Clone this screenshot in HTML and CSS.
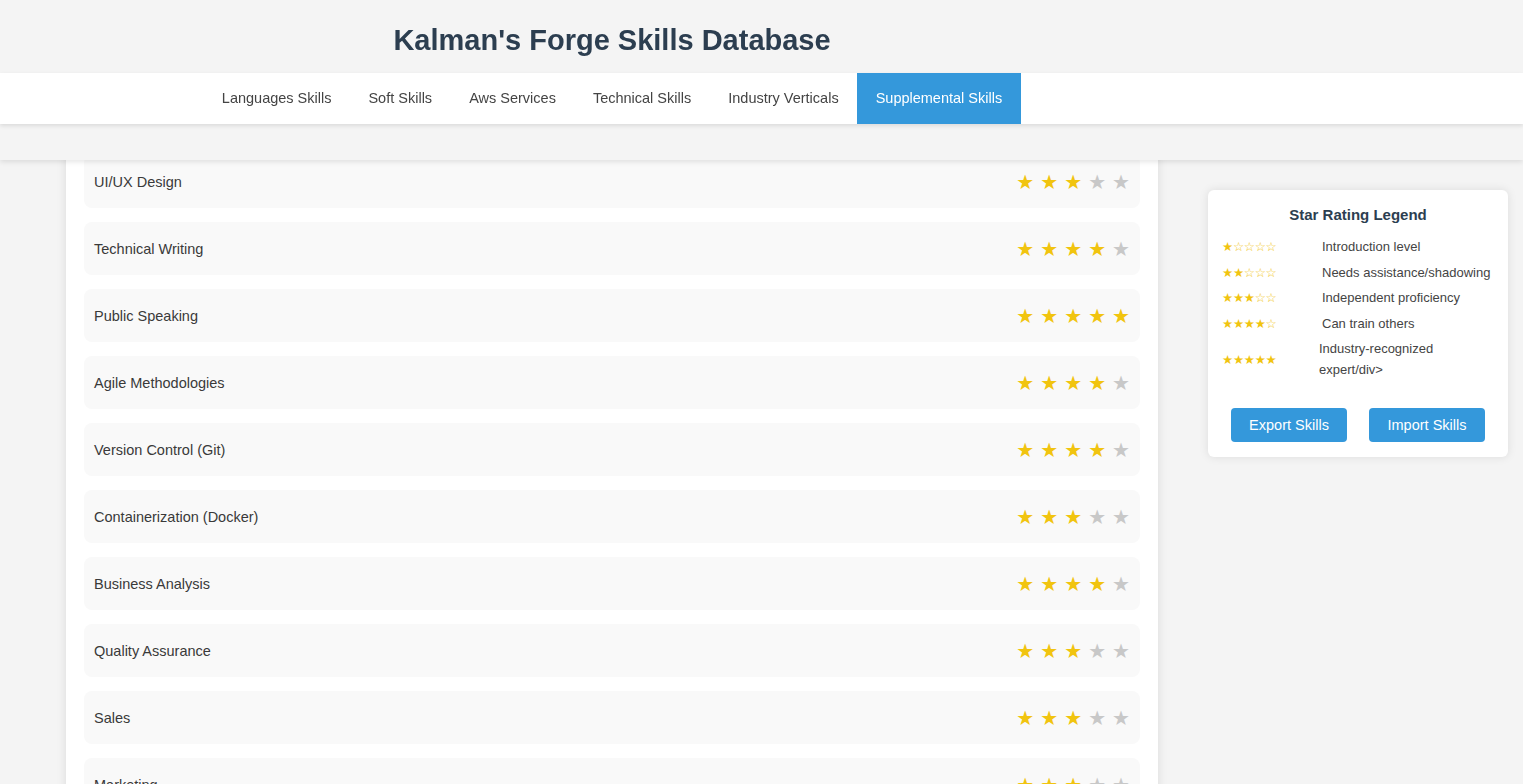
FILE: index.html
```html
<!DOCTYPE html>
<html lang="en">
<head>
<meta charset="utf-8">
<title>Kalman's Forge Skills Database</title>
<link rel="stylesheet" href="styles.css">
</head>
<body>
<header class="site-header">
  <div class="title-wrap"><h1 class="title">Kalman's Forge Skills Database</h1></div>
  <nav class="tabs">
    <div class="tabs-inner">
      <a class="tab">Languages Skills</a>
      <a class="tab">Soft Skills</a>
      <a class="tab">Aws Services</a>
      <a class="tab">Technical Skills</a>
      <a class="tab">Industry Verticals</a>
      <a class="tab active">Supplemental Skills</a>
    </div>
  </nav>
</header>

<div class="layout">
  <main class="card skills">
    <div class="skill"><span class="name">UI/UX Design</span><span class="stars"><i class="on">★</i><i class="on">★</i><i class="on">★</i><i>★</i><i>★</i></span></div>
    <div class="skill"><span class="name">Technical Writing</span><span class="stars"><i class="on">★</i><i class="on">★</i><i class="on">★</i><i class="on">★</i><i>★</i></span></div>
    <div class="skill"><span class="name">Public Speaking</span><span class="stars"><i class="on">★</i><i class="on">★</i><i class="on">★</i><i class="on">★</i><i class="on">★</i></span></div>
    <div class="skill"><span class="name">Agile Methodologies</span><span class="stars"><i class="on">★</i><i class="on">★</i><i class="on">★</i><i class="on">★</i><i>★</i></span></div>
    <div class="skill"><span class="name">Version Control (Git)</span><span class="stars"><i class="on">★</i><i class="on">★</i><i class="on">★</i><i class="on">★</i><i>★</i></span></div>
    <div class="skill"><span class="name">Containerization (Docker)</span><span class="stars"><i class="on">★</i><i class="on">★</i><i class="on">★</i><i>★</i><i>★</i></span></div>
    <div class="skill"><span class="name">Business Analysis</span><span class="stars"><i class="on">★</i><i class="on">★</i><i class="on">★</i><i class="on">★</i><i>★</i></span></div>
    <div class="skill"><span class="name">Quality Assurance</span><span class="stars"><i class="on">★</i><i class="on">★</i><i class="on">★</i><i>★</i><i>★</i></span></div>
    <div class="skill"><span class="name">Sales</span><span class="stars"><i class="on">★</i><i class="on">★</i><i class="on">★</i><i>★</i><i>★</i></span></div>
    <div class="skill"><span class="name">Marketing</span><span class="stars"><i class="on">★</i><i class="on">★</i><i class="on">★</i><i>★</i><i>★</i></span></div>
  </main>

  <aside class="card legend">
    <h3 class="legend-title">Star Rating Legend</h3>
    <div class="legend-row"><span class="legend-stars">★☆☆☆☆</span><span class="legend-text">Introduction level</span></div>
    <div class="legend-row"><span class="legend-stars">★★☆☆☆</span><span class="legend-text">Needs assistance/shadowing</span></div>
    <div class="legend-row"><span class="legend-stars">★★★☆☆</span><span class="legend-text">Independent proficiency</span></div>
    <div class="legend-row"><span class="legend-stars">★★★★☆</span><span class="legend-text">Can train others</span></div>
    <div class="legend-row wrap"><span class="legend-stars">★★★★★</span><span class="legend-text">Industry-recognized expert/div&gt;</span></div>
    <div class="actions">
      <button class="btn">Export Skills</button>
      <button class="btn">Import Skills</button>
    </div>
  </aside>
</div>
</body>
</html>
```

FILE: styles.css
```css
html, body {
  margin: 0;
  padding: 0;
}
body {
  background: #f4f4f4;
  font-family: "Liberation Sans", Arial, sans-serif;
  color: #444;
  overflow: hidden;
}

/* fixed header overlaying scrolled content */
.site-header {
  position: fixed;
  top: 0;
  left: 0;
  right: 0;
  height: 160px;
  background: #f4f4f4;
  box-shadow: 0 2px 5px rgba(0, 0, 0, 0.1);
  z-index: 10;
}
.title-wrap {
  padding-left: 66px;
  width: 1092px;
  text-align: center;
}
.title {
  margin: 0;
  padding-top: 22px;
  font-size: 29px;
  line-height: 36px;
  font-weight: bold;
  color: #2c3e50;
}
.tabs {
  margin-top: 15px;
  background: #fff;
  box-shadow: 0 2px 4px rgba(0, 0, 0, 0.1);
}
.tabs-inner {
  margin-left: 66px;
  width: 1092px;
  display: flex;
  justify-content: center;
}
.tab {
  display: block;
  padding: 16px 18.5px;
  font-size: 14.5px;
  line-height: 19px;
  color: #444;
  text-decoration: none;
}
.tab.active {
  background: #3498db;
  color: #fff;
}

.layout {
  display: flex;
  align-items: flex-start;
  gap: 50px;
  padding: 137px 0 0 66px;
}
.card {
  background: #fff;
  box-shadow: 0 0 10px rgba(0, 0, 0, 0.1);
}
.skills {
  width: 1092px;
  box-sizing: border-box;
  padding: 18px;
  display: flex;
  flex-direction: column;
  gap: 14px;
}
.skill {
  display: flex;
  align-items: center;
  justify-content: space-between;
  height: 53px;
  box-sizing: border-box;
  padding: 0 10px;
  background: #f9f9f9;
  border-radius: 8px;
}
.name {
  font-size: 14.5px;
  color: #3a3a3a;
}
.stars {
  display: flex;
  gap: 6px;
  font-family: "DejaVu Sans", sans-serif;
  font-size: 20px;
  line-height: 24px;
}
.stars i {
  font-style: normal;
  color: #c8c8c8;
}
.stars i.on {
  color: #f1c40f;
}

.legend {
  width: 300px;
  box-sizing: border-box;
  margin-top: 53px;
  padding: 15px 14px;
  border-radius: 6px;
}
.legend-title {
  margin: 0 0 11px;
  text-align: center;
  font-size: 15px;
  line-height: 20px;
  color: #2c3e50;
}
.legend-row {
  display: flex;
  align-items: center;
  margin-bottom: 4.5px;
}
.legend-stars {
  width: 100px;
  flex-shrink: 0;
  font-family: "DejaVu Sans", sans-serif;
  font-size: 12.5px;
  color: #f1c40f;
  letter-spacing: -0.3px;
}
.legend-row.wrap .legend-stars {
  width: 97px;
}
.legend-text {
  font-size: 13px;
  line-height: 21px;
  color: #444;
}
.actions {
  display: flex;
  justify-content: center;
  gap: 22px;
  margin-top: 28px;
}
.btn {
  width: 116px;
  height: 34px;
  border: none;
  border-radius: 4px;
  background: #3498db;
  color: #fff;
  font-family: "Liberation Sans", Arial, sans-serif;
  font-size: 14.5px;
  cursor: pointer;
}
```
